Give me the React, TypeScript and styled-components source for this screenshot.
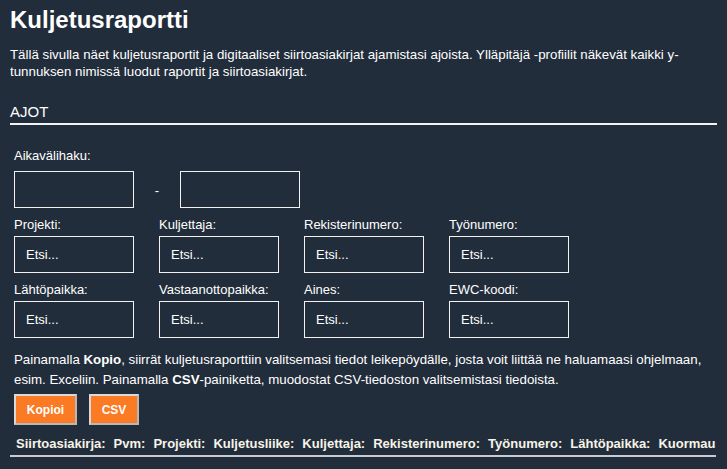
import React from 'react';
import styled, { createGlobalStyle } from 'styled-components';

const GlobalStyle = createGlobalStyle`
  html, body {
    margin: 0;
    padding: 0;
    background: #222d3b;
  }

  body {
    font-family: 'Liberation Sans', Arial, sans-serif;
    color: #ffffff;
  }
`;

const Page = styled.div`
  padding: 0 10px;
  overflow: hidden;
  height: 469px;
  box-sizing: border-box;
`;

const Title = styled.h1`
  font-size: 24px;
  font-weight: bold;
  margin: 0;
  padding-top: 7px;
  line-height: 26px;
`;

const Intro = styled.p`
  font-size: 13.3px;
  line-height: 17px;
  margin: 13px 0 0;
  padding-right: 30px;
`;

const SectionTitle = styled.h2`
  font-size: 15px;
  font-weight: normal;
  margin: 22px 0 0;
  padding-bottom: 1px;
  line-height: 20px;
  border-bottom: 2px solid #f2f2f2;
`;

const Filters = styled.div`
  padding: 23px 4px 0;
`;

const Label = styled.div`
  font-size: 13px;
  line-height: 15px;
  margin-bottom: 4px;
`;

const DateRow = styled.div`
  display: flex;
  align-items: center;
  margin: 8px 0 9px;
`;

const Dash = styled.span`
  font-size: 13px;
  width: 46px;
  text-align: center;
  padding-top: 2px;
`;

const Input = styled.div`
  width: 120px;
  height: 37px;
  box-sizing: border-box;
  border: 1px solid #f2f2f2;
  padding: 0 11px;
  display: flex;
  align-items: center;
  font-size: 13px;
`;

const Grid = styled.div`
  display: grid;
  grid-template-columns: repeat(4, 120px);
  column-gap: 25px;
  row-gap: 9px;
`;

const Field = styled.div``;

const Help = styled.p`
  font-size: 13.3px;
  line-height: 20px;
  margin: 12px 0 0 4px;

  b {
    font-weight: bold;
  }
`;

const Buttons = styled.div`
  display: flex;
  gap: 12px;
  margin: 4px 0 0 4px;
`;

const Button = styled.button<{ $width: number }>`
  width: ${(p) => p.$width}px;
  height: 31px;
  background: #fb7a24;
  color: #ffffff;
  font-family: 'Liberation Sans', Arial, sans-serif;
  font-size: 12px;
  font-weight: bold;
  border: 2px solid #d9d9d9;
  border-right-color: #b8b8b8;
  border-bottom-color: #b8b8b8;
  padding: 0;
`;

const Header = styled.div`
  display: flex;
  gap: 8px;
  white-space: nowrap;
  overflow: hidden;
  margin-top: 11px;
  padding: 0 0 4px 6px;
  border-bottom: 2px solid #c8ccd2;
  width: 706px;
  box-sizing: border-box;
`;

const HeaderCell = styled.span`
  font-size: 13px;
  font-weight: bold;
  color: #f7f4e8;
  line-height: 15px;
`;

const fields = [
  'Projekti:',
  'Kuljettaja:',
  'Rekisterinumero:',
  'Työnumero:',
  'Lähtöpaikka:',
  'Vastaanottopaikka:',
  'Aines:',
  'EWC-koodi:',
];

const columns = [
  'Siirtoasiakirja:',
  'Pvm:',
  'Projekti:',
  'Kuljetusliike:',
  'Kuljettaja:',
  'Rekisterinumero:',
  'Työnumero:',
  'Lähtöpaikka:',
  'Kuormauspaikka:',
  'Vastaanottopaikka:',
];

const App: React.FC = () => {
  return (
    <>
      <GlobalStyle />
      <Page>
        <Title>Kuljetusraportti</Title>
        <Intro>
          Tällä sivulla näet kuljetusraportit ja digitaaliset siirtoasiakirjat ajamistasi ajoista.
          Ylläpitäjä -profiilit näkevät kaikki y-tunnuksen nimissä luodut raportit ja
          siirtoasiakirjat.
        </Intro>
        <SectionTitle>AJOT</SectionTitle>
        <Filters>
          <Label>Aikavälihaku:</Label>
          <DateRow>
            <Input />
            <Dash>-</Dash>
            <Input />
          </DateRow>
          <Grid>
            {fields.map((f) => (
              <Field key={f}>
                <Label>{f}</Label>
                <Input>Etsi...</Input>
              </Field>
            ))}
          </Grid>
        </Filters>
        <Help>
          Painamalla <b>Kopio</b>, siirrät kuljetusraporttiin valitsemasi tiedot leikepöydälle,
          josta voit liittää ne haluamaasi ohjelmaan, esim. Exceliin. Painamalla <b>CSV</b>
          -painiketta, muodostat CSV-tiedoston valitsemistasi tiedoista.
        </Help>
        <Buttons>
          <Button $width={63}>Kopioi</Button>
          <Button $width={50}>CSV</Button>
        </Buttons>
        <Header>
          {columns.map((c) => (
            <HeaderCell key={c}>{c}</HeaderCell>
          ))}
        </Header>
      </Page>
    </>
  );
};

export default App;
